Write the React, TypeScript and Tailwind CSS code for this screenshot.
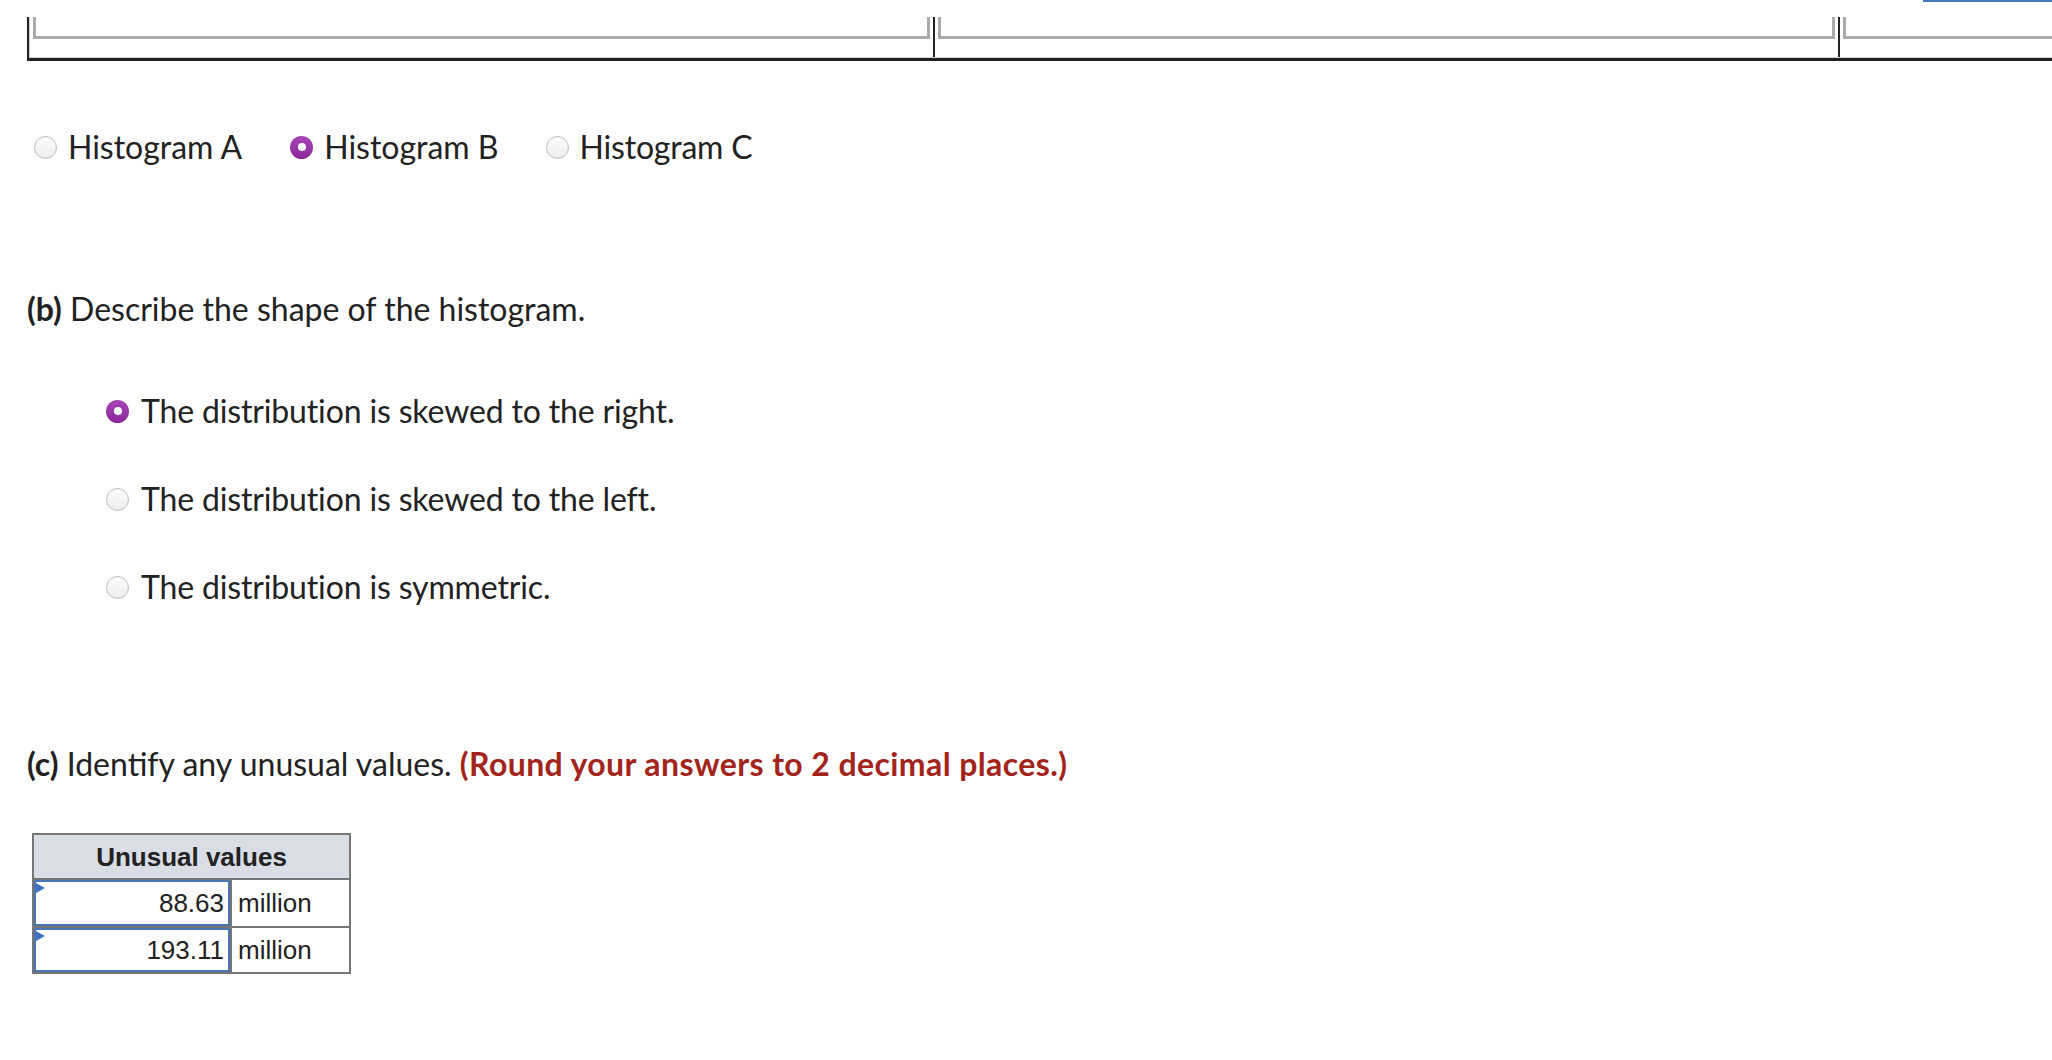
import React from "react";

function Radio({ checked }: { checked?: boolean }) {
  if (checked) {
    return (
      <span className="flex h-[23px] w-[23px] shrink-0 items-center justify-center rounded-full bg-gradient-to-b from-[#a545b5] to-[#8b2899]">
        <span className="h-[8px] w-[8px] rounded-full bg-white" />
      </span>
    );
  }
  return (
    <span className="h-[23px] w-[23px] shrink-0 rounded-full border border-[#bdbdbd] bg-gradient-to-b from-white to-[#ececec] shadow-[inset_0_1px_1px_rgba(0,0,0,0.05)]" />
  );
}

function TopCell() {
  return (
    <div className="h-full w-[905px] shrink-0 border-r-2 border-r-[#222]">
      <div className="mx-[3px] h-[22px] border-x-[3px] border-b-[3px] border-[#ababab]" />
    </div>
  );
}

function Option({ checked, label }: { checked?: boolean; label: string }) {
  return (
    <div className="flex h-[40px] items-center">
      <Radio checked={checked} />
      <span className="ml-[12px] whitespace-nowrap tracking-[-0.15px]">{label}</span>
    </div>
  );
}

function ValueRow({ value, last }: { value: string; last?: boolean }) {
  return (
    <div className={"flex h-[46px] " + (last ? "border-t-2 border-[#767676]" : "")}>
      <div className="relative flex w-[196px] items-center justify-end border-2 border-[#4a77b4] pr-[4px]">
        <span className="absolute left-0 top-[1px] h-0 w-0 border-y-[5px] border-l-[9px] border-y-transparent border-l-[#3f73c2]" />
        {value}
      </div>
      <div className="flex flex-1 items-center border-l-2 border-[#767676] pl-[6px]">million</div>
    </div>
  );
}

export default function App() {
  return (
    <div className="h-[1060px] w-[2052px] overflow-hidden bg-white font-['Lato',sans-serif] text-[32px] leading-[40px] text-[#222]">
      <div className="flex h-[2px]">
        <div className="ml-auto h-[2px] w-[129px] bg-[#4a78c0]" />
      </div>

      <div className="ml-[27px] mt-[15px] h-[44px] w-[2800px] border-b-[3px] border-l-2 border-[#222]">
        <div className="flex h-full border-b border-l border-[#cfcfcf]">
          <TopCell />
          <TopCell />
          <TopCell />
        </div>
      </div>

      <div className="ml-[34px] mt-[66px] flex h-[40px] items-center">
        <Radio />
        <span className="ml-[11px] mr-[48px] whitespace-nowrap">Histogram A</span>
        <Radio checked />
        <span className="ml-[11px] mr-[47px] whitespace-nowrap">Histogram B</span>
        <Radio />
        <span className="ml-[11px] whitespace-nowrap tracking-[-0.2px]">Histogram C</span>
      </div>

      <div className="ml-[27px] mt-[122px] whitespace-nowrap">
        <span className="font-bold">(b)</span> Describe the shape of the histogram.
      </div>

      <div className="ml-[106px] mt-[62px] flex flex-col gap-[48px]">
        <Option checked label="The distribution is skewed to the right." />
        <Option label="The distribution is skewed to the left." />
        <Option label="The distribution is symmetric." />
      </div>

      <div className="ml-[27px] mt-[137px] whitespace-nowrap">
        <span className="font-bold">(c)</span> Identify any unusual values.{" "}
        <span className="font-bold tracking-[0.4px] text-[#a3241c]">(Round your answers to 2 decimal places.)</span>
      </div>

      <div className="ml-[32px] mt-[49px] w-[319px] border-2 border-[#767676] font-['Liberation_Sans',Arial,sans-serif] text-[26px] leading-none text-[#222]">
        <div className="flex h-[45px] items-center justify-center border-b-2 border-[#767676] bg-[#d9dde6] font-bold">
          Unusual values
        </div>
        <ValueRow value="88.63" />
        <ValueRow value="193.11" last />
      </div>
    </div>
  );
}
